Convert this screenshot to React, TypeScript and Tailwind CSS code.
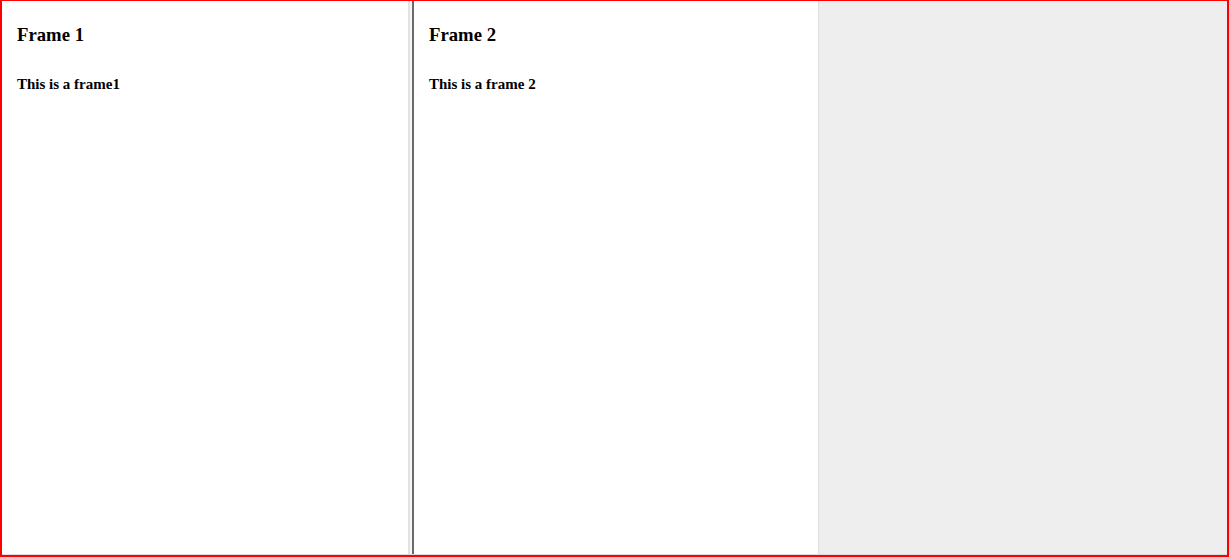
export default function App() {
  return (
    <div className="w-[1229px] h-[557px] border-[#ff0000] border-t border-x-2 border-b-2 box-border bg-white" style={{ fontFamily: '"Liberation Serif", "Times New Roman", serif' }}>
      <div className="flex h-full border-b border-[#dcdcdc] text-black">
        <div className="w-[406px] h-full bg-white pl-[15px] pt-[23px]">
          <h3 className="text-[18.72px] leading-[22px] font-bold">Frame 1</h3>
          <h4 className="mt-[29px] text-[15px] leading-[18px] font-bold">This is a frame1</h4>
        </div>
        <div className="flex h-full w-[6px]">
          <div className="w-[2px] h-full bg-[#e2e2e2]" />
          <div className="w-[2px] h-full bg-[#f6f6f6]" />
          <div className="w-[2px] h-full bg-[#6a6a6a]" />
        </div>
        <div className="w-[405px] h-full bg-white pl-[15px] pt-[23px] border-r border-[#dedede]">
          <h3 className="text-[18.72px] leading-[22px] font-bold">Frame 2</h3>
          <h4 className="mt-[29px] text-[15px] leading-[18px] font-bold">This is a frame 2</h4>
        </div>
        <div className="flex-1 h-full bg-[#eeeeee]" />
      </div>
    </div>
  );
}
